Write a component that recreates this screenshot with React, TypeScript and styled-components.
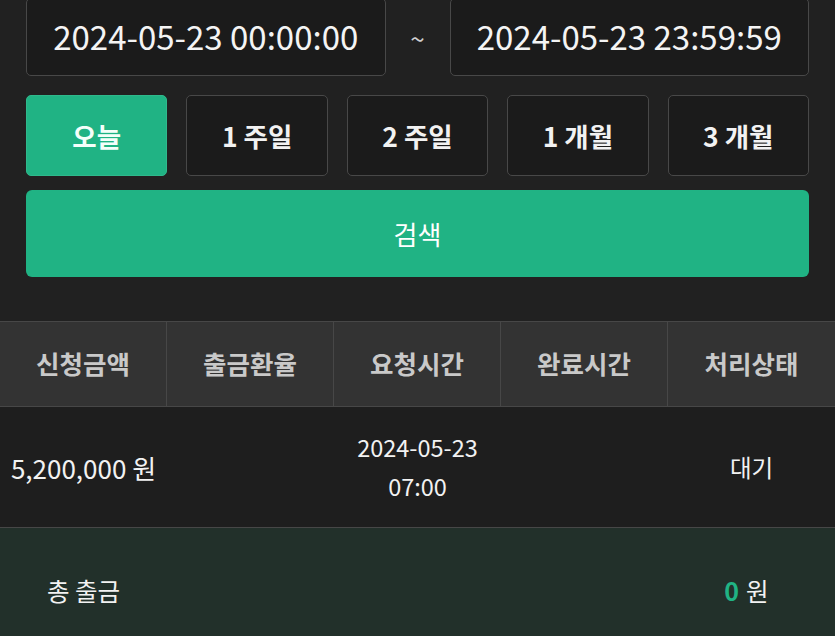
import React from "react";
import styled, { createGlobalStyle } from "styled-components";

const Global = createGlobalStyle`
  html, body { margin: 0; padding: 0; background: #212121; }
  body { font-family: "Noto Sans CJK KR", "Noto Sans", sans-serif; color: #f2f2f2; overflow: hidden; }
  * { box-sizing: border-box; }
`;

const Page = styled.div`
  width: 835px;
  height: 636px;
  background: #212121;
  overflow: hidden;
`;

const Form = styled.div`
  padding: 0 26px;
`;

const DateRow = styled.div`
  display: grid;
  grid-template-columns: 1fr 64px 1fr;
  margin-top: -2px;
  height: 78px;
`;

const DateBox = styled.div`
  display: flex;
  align-items: center;
  justify-content: center;
  background: #1b1b1b;
  border: 1px solid #484848;
  border-radius: 5px;
  font-size: 33px;
  color: #f4f4f4;
  padding-bottom: 3px;
`;

const Tilde = styled.div`
  display: flex;
  align-items: center;
  justify-content: center;
  font-size: 26px;
  color: #cfcfcf;
`;

const PeriodRow = styled.div`
  display: grid;
  grid-template-columns: repeat(5, 1fr);
  gap: 19px;
  margin-top: 19px;
  height: 81px;
`;

const PeriodButton = styled.div<{ $active?: boolean }>`
  display: flex;
  align-items: center;
  justify-content: center;
  border-radius: 5px;
  font-size: 26.5px;
  font-weight: 700;
  color: ${(p) => (p.$active ? "#f4fffa" : "#f2f2f2")};
  background: ${(p) => (p.$active ? "#20b384" : "#1b1b1b")};
  border: 1px solid ${(p) => (p.$active ? "#2fb98c" : "#484848")};
`;

const SearchButton = styled.div`
  margin-top: 14px;
  height: 87px;
  border-radius: 6px;
  background: #20b384;
  display: flex;
  align-items: center;
  justify-content: center;
  font-size: 26px;
  color: #ffffff;
`;

const Table = styled.div`
  margin-top: 44px;
`;

const Row = styled.div<{ $kind: "head" | "body" | "total" }>`
  display: grid;
  grid-template-columns: repeat(5, 1fr);
  height: ${(p) => (p.$kind === "head" ? "85px" : p.$kind === "body" ? "122px" : "120px")};
  background: ${(p) => (p.$kind === "head" ? "#333333" : p.$kind === "body" ? "#1e1e1e" : "#22302a")};
  border-top: ${(p) => (p.$kind === "total" ? "none" : "1px solid #474747")};
  border-bottom: ${(p) => (p.$kind === "body" ? "1px solid #474747" : "none")};
`;

const HeadCell = styled.div<{ $last?: boolean }>`
  display: flex;
  align-items: center;
  justify-content: center;
  font-size: 25.5px;
  font-weight: 700;
  color: #c9c9c9;
  padding-bottom: 3px;
  border-right: ${(p) => (p.$last ? "none" : "1px solid #474747")};
`;

const Cell = styled.div<{ $big?: boolean }>`
  display: flex;
  flex-direction: column;
  align-items: center;
  justify-content: center;
  font-size: ${(p) => (p.$big ? "26px" : "23.5px")};
  line-height: 39px;
  color: #f2f2f2;
  text-align: center;
`;

const TotalCell = styled(Cell)`
  padding-top: 4px;
  font-size: 24.5px;
`;

const Green = styled.span`
  color: #20b384;
  font-weight: 700;
  font-size: 25px;
  margin-right: 7px;
`;

const TotalAmount = styled.div`
  margin-right: 10px;
`;

const periods = ["오늘", "1 주일", "2 주일", "1 개월", "3 개월"];
const heads = ["신청금액", "출금환율", "요청시간", "완료시간", "처리상태"];

export default function App() {
  return (
    <Page>
      <Global />
      <Form>
        <DateRow>
          <DateBox>2024-05-23 00:00:00</DateBox>
          <Tilde>~</Tilde>
          <DateBox>2024-05-23 23:59:59</DateBox>
        </DateRow>
        <PeriodRow>
          {periods.map((p, i) => (
            <PeriodButton key={p} $active={i === 0}>
              {p}
            </PeriodButton>
          ))}
        </PeriodRow>
        <SearchButton>검색</SearchButton>
      </Form>
      <Table>
        <Row $kind="head">
          {heads.map((h, i) => (
            <HeadCell key={h} $last={i === heads.length - 1}>
              {h}
            </HeadCell>
          ))}
        </Row>
        <Row $kind="body">
          <Cell $big>5,200,000 원</Cell>
          <Cell />
          <Cell>
            <div>2024-05-23</div>
            <div>07:00</div>
          </Cell>
          <Cell />
          <Cell>대기</Cell>
        </Row>
        <Row $kind="total">
          <TotalCell>총 출금</TotalCell>
          <TotalCell />
          <TotalCell />
          <TotalCell />
          <TotalCell>
            <TotalAmount>
              <Green>0</Green>원
            </TotalAmount>
          </TotalCell>
        </Row>
      </Table>
    </Page>
  );
}
